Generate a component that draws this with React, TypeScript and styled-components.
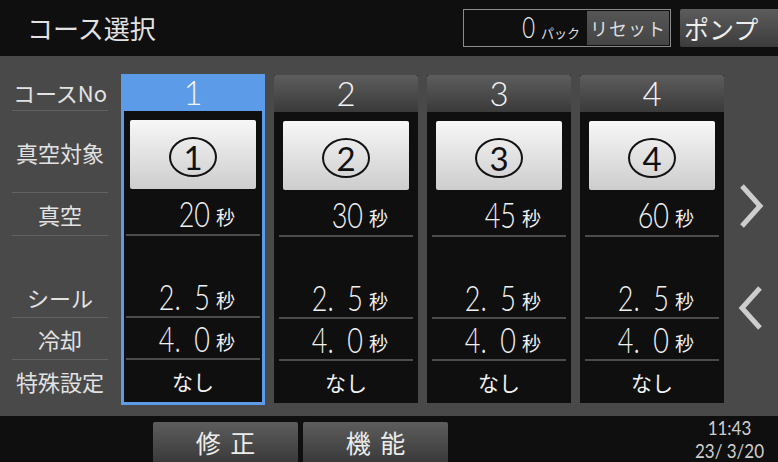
import styled, { createGlobalStyle } from "styled-components";

const JP = `"Noto Sans CJK JP", "Noto Sans", sans-serif`;
const NUM = `Lato, "Noto Sans", sans-serif`;
const ROWS = "37px 82px 43px 41px 41px 42px 42px";

interface Course {
  no: number;
  vacuum: string;
  seal: string;
  cool: string;
  special: string;
}

// en space after the point, as the panel prints "2. 5"
const courses: Course[] = [
  { no: 1, vacuum: "20", seal: "2.\u20025", cool: "4.\u20020", special: "なし" },
  { no: 2, vacuum: "30", seal: "2.\u20025", cool: "4.\u20020", special: "なし" },
  { no: 3, vacuum: "45", seal: "2.\u20025", cool: "4.\u20020", special: "なし" },
  { no: 4, vacuum: "60", seal: "2.\u20025", cool: "4.\u20020", special: "なし" },
];

const labels = [
  { text: "コースNo", line: true },
  { text: "真空対象", line: true },
  { text: "真空", line: true },
  { text: "", line: false },
  { text: "シール", line: true },
  { text: "冷却", line: true },
  { text: "特殊設定", line: false },
];

const GlobalStyle = createGlobalStyle`
  html, body {
    margin: 0;
    padding: 0;
    background: #0f0f0f;
  }
  body {
    font-family: ${JP};
  }
`;

const Screen = styled.div`
  width: 778px;
  height: 462px;
  display: flex;
  flex-direction: column;
  background: #0f0f0f;
  overflow: hidden;
`;

const TopBar = styled.header`
  height: 56px;
  flex-shrink: 0;
  display: flex;
  align-items: center;
  padding-left: 27px;
`;

const Title = styled.h1`
  flex: 1;
  margin: 0;
  font-size: 26px;
  font-weight: 400;
  line-height: 1;
  color: #e2e2e2;
`;

const Counter = styled.div`
  width: 208px;
  height: 38px;
  box-sizing: border-box;
  border: 1px solid #8c8c8c;
  padding: 1px;
  margin-right: 9px;
  display: flex;
  align-items: center;
  justify-content: flex-end;
`;

const CountValue = styled.span`
  display: inline-block;
  font-family: ${NUM};
  font-weight: 300;
  font-size: 22px;
  line-height: 1;
  color: #eeeeee;
  transform: scaleY(1.3);
`;

const CountUnit = styled.span`
  font-size: 13px;
  color: #e0e0e0;
  margin: 8px 7px 0 6px;
`;

const ResetButton = styled.button`
  width: 82px;
  height: 100%;
  border: none;
  padding: 0;
  background: linear-gradient(#555555, #454545);
  color: #dddddd;
  font-family: ${JP};
  font-size: 18px;
  letter-spacing: 1px;
`;

const PumpButton = styled.button`
  width: 98px;
  height: 38px;
  border: none;
  border-radius: 2px 0 0 2px;
  padding: 0 0 0 4px;
  background: linear-gradient(#5c5c5c, #3c3c3c);
  color: #eeeeee;
  font-family: ${JP};
  font-size: 25px;
  text-align: left;
`;

const Main = styled.main`
  flex: 1;
  display: flex;
  align-items: flex-start;
  padding: 18px 0 0 12px;
  background: #494949;
`;

const LabelColumn = styled.div`
  width: 96px;
  display: grid;
  grid-template-rows: ${ROWS};
`;

const LabelCell = styled.div<{ $line: boolean }>`
  display: flex;
  align-items: center;
  justify-content: center;
  font-size: 22px;
  color: #e2e2e2;
  white-space: nowrap;
  border-bottom: ${(p) => (p.$line ? "1px solid #626262" : "none")};
`;

const Courses = styled.div`
  display: flex;
  gap: 9px;
  margin-left: 13px;
  align-items: flex-start;
`;

const CourseCol = styled.section<{ $active: boolean }>`
  width: 144px;
  box-sizing: border-box;
  display: grid;
  grid-template-rows: ${ROWS};
  background: #0f0f0f;
  padding-bottom: ${(p) => (p.$active ? "3px" : "0")};
  margin-top: ${(p) => (p.$active ? "0" : "1px")};
  box-shadow: ${(p) => (p.$active ? "inset 0 0 0 3px #5b9be8" : "none")};
`;

const ColHeader = styled.div<{ $active: boolean }>`
  display: flex;
  align-items: center;
  justify-content: center;
  background: ${(p) =>
    p.$active ? "#5b9be8" : "linear-gradient(#5d5d5d, #3a3a3a)"};
  border-radius: ${(p) => (p.$active ? "0" : "2px 2px 0 0")};
  color: #f4f4f4;
  font-family: ${NUM};
  font-weight: 300;
  font-size: 33px;
  line-height: 1;
`;

const TargetCell = styled.div`
  padding: 9px 9px 4px;
  display: flex;
`;

const TargetButton = styled.button`
  flex: 1;
  border: none;
  border-radius: 2px;
  padding: 0;
  background: linear-gradient(#f7f7f7, #cdcdcd);
  display: flex;
  align-items: center;
  justify-content: center;
`;

const Circled = styled.span`
  width: 44px;
  height: 36px;
  box-sizing: content-box;
  border: 2px solid #111111;
  border-radius: 50%;
  display: flex;
  align-items: center;
  justify-content: center;
  margin-top: 4px;
  color: #111111;
  font-family: ${NUM};
  font-size: 33px;
  line-height: 36px;
`;

const ValueCell = styled.div<{ $line?: boolean; $center?: boolean }>`
  margin: 0 5px;
  display: flex;
  align-items: center;
  justify-content: ${(p) => (p.$center ? "center" : "flex-end")};
  padding-right: ${(p) => (p.$center ? "0" : "25px")};
  border-bottom: ${(p) => (p.$line ? "2px solid #4c4c4c" : "none")};
  color: #f2f2f2;
`;

const Digits = styled.span`
  display: inline-block;
  font-family: ${NUM};
  font-weight: 300;
  font-size: 27px;
  line-height: 1;
  white-space: pre;
  transform: scaleY(1.3);
`;

const Unit = styled.span`
  font-size: 19px;
  line-height: 1;
  margin: 6px 0 0 6px;
`;

const Plain = styled.span`
  font-size: 21px;
`;

const ArrowColumn = styled.div`
  flex: 1;
  display: flex;
  flex-direction: column;
  align-items: center;
  padding-top: 109px;
  gap: 56px;
`;

const Footer = styled.footer`
  height: 46px;
  flex-shrink: 0;
  display: flex;
  align-items: flex-end;
  gap: 5px;
  padding-left: 153px;
`;

const FooterButton = styled.button`
  width: 145px;
  height: 40px;
  border: none;
  border-radius: 2px 2px 0 0;
  padding: 0;
  background: linear-gradient(#5d5d5d, #3a3a3a);
  color: #ececec;
  font-family: ${JP};
  font-size: 25px;
  word-spacing: 4px;
`;

const Clock = styled.div`
  margin-left: auto;
  margin-right: 14px;
  align-self: center;
  display: flex;
  flex-direction: column;
  align-items: center;
  gap: 6px;
  color: #cfcfcf;
  font-family: ${NUM};
  font-size: 17px;
  line-height: 1;
  white-space: pre;
`;

const ClockLine = styled.span`
  display: inline-block;
  transform: scaleY(1.15);
`;

const Chevron = ({ dir }: { dir: "left" | "right" }) => (
  <svg width="28" height="46" viewBox="0 0 28 46">
    <polyline
      points={dir === "right" ? "5,3 23,23 5,43" : "23,3 5,23 23,43"}
      fill="none"
      stroke="#cdcdcd"
      strokeWidth="5"
    />
  </svg>
);

const App = () => {
  return (
    <Screen>
      <GlobalStyle />
      <TopBar>
        <Title>コース選択</Title>
        <Counter>
          <CountValue>0</CountValue>
          <CountUnit>パック</CountUnit>
          <ResetButton>リセット</ResetButton>
        </Counter>
        <PumpButton>ポンプ</PumpButton>
      </TopBar>
      <Main>
        <LabelColumn>
          {labels.map((label, index) => (
            <LabelCell key={index} $line={label.line}>
              {label.text}
            </LabelCell>
          ))}
        </LabelColumn>
        <Courses>
          {courses.map((course) => {
            const active = course.no === 1;
            return (
              <CourseCol key={course.no} $active={active}>
                <ColHeader $active={active}>{course.no}</ColHeader>
                <TargetCell>
                  <TargetButton>
                    <Circled>{course.no}</Circled>
                  </TargetButton>
                </TargetCell>
                <ValueCell $line>
                  <Digits>{course.vacuum}</Digits>
                  <Unit>秒</Unit>
                </ValueCell>
                <ValueCell />
                <ValueCell $line>
                  <Digits>{course.seal}</Digits>
                  <Unit>秒</Unit>
                </ValueCell>
                <ValueCell $line>
                  <Digits>{course.cool}</Digits>
                  <Unit>秒</Unit>
                </ValueCell>
                <ValueCell $center>
                  <Plain>{course.special}</Plain>
                </ValueCell>
              </CourseCol>
            );
          })}
        </Courses>
        <ArrowColumn>
          <Chevron dir="right" />
          <Chevron dir="left" />
        </ArrowColumn>
      </Main>
      <Footer>
        <FooterButton>修 正</FooterButton>
        <FooterButton>機 能</FooterButton>
        <Clock>
          <ClockLine>11:43</ClockLine>
          <ClockLine>23/ 3/20</ClockLine>
        </Clock>
      </Footer>
    </Screen>
  );
};

export default App;
